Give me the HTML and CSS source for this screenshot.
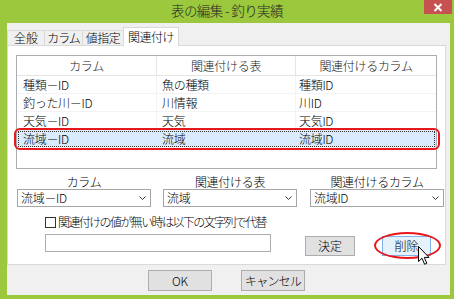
FILE: index.html
```html
<!DOCTYPE html>
<html lang="ja">
<head>
<meta charset="utf-8">
<title>表の編集 - 釣り実績</title>
<link rel="stylesheet" href="styles.css">
</head>
<body>
<div class="window">
  <div class="titlebar">
    <span></span>
    <span class="title">表の編集 - 釣り実績</span>
    <span class="close-wrap"><span class="close"><svg width="10" height="9" viewBox="0 0 10 9"><path d="M1.5 1 L8.5 8 M8.5 1 L1.5 8" stroke="#fff" stroke-width="2" fill="none"/></svg></span></span>
  </div>
  <div class="client">
    <div class="tabs">
      <div class="tab t1">全般</div>
      <div class="tab t2">カラム</div>
      <div class="tab t3">値指定</div>
      <div class="tab active">関連付け</div>
    </div>
    <div class="panel">
      <div class="list">
        <div class="row head">
          <div class="cell">カラム</div>
          <div class="cell">関連付ける表</div>
          <div class="cell">関連付けるカラム</div>
        </div>
        <div class="row">
          <div class="cell c1">種類－ID</div>
          <div class="cell c2">魚の種類</div>
          <div class="cell c3">種類ID</div>
        </div>
        <div class="row">
          <div class="cell c1">釣った川－ID</div>
          <div class="cell c2">川情報</div>
          <div class="cell c3">川ID</div>
        </div>
        <div class="row">
          <div class="cell c1">天気－ID</div>
          <div class="cell c2">天気</div>
          <div class="cell c3">天気ID</div>
        </div>
        <div class="row selected">
          <div class="cell c1">流域－ID</div>
          <div class="cell c2">流域</div>
          <div class="cell c3">流域ID</div>
        </div>
      </div>
      <div class="labels">
        <div>カラム</div>
        <div>関連付ける表</div>
        <div>関連付けるカラム</div>
      </div>
      <div class="combos">
        <div class="combo"><span>流域－ID</span><svg width="7" height="4" viewBox="0 0 7 4"><path d="M0.5 0.5 L3.5 3.5 L6.5 0.5" stroke="#333" fill="none"/></svg></div>
        <div class="combo"><span>流域</span><svg width="7" height="4" viewBox="0 0 7 4"><path d="M0.5 0.5 L3.5 3.5 L6.5 0.5" stroke="#333" fill="none"/></svg></div>
        <div class="combo"><span>流域ID</span><svg width="7" height="4" viewBox="0 0 7 4"><path d="M0.5 0.5 L3.5 3.5 L6.5 0.5" stroke="#333" fill="none"/></svg></div>
      </div>
      <div class="check-row">
        <span class="checkbox"></span>
        <span class="check-label">関連付けの値が無い時は以下の文字列で代替</span>
      </div>
      <div class="edit-row">
        <div class="textbox"></div>
        <div class="btn b-decide">決定</div>
        <div class="btn b-delete hover">削除
          <span class="ring"></span>
          <svg class="cursor" width="13" height="20" viewBox="0 0 13 20"><path d="M0.5 0.5 L0.5 15.5 L4 12.2 L6.6 18.3 L8.8 17.3 L6.3 11.4 L11 11.4 Z" fill="#fff" stroke="#000" stroke-width="1" stroke-linejoin="miter"/></svg>
        </div>
      </div>
    </div>
    <div class="footer">
      <div class="btn b-ok">OK</div>
      <div class="btn b-cancel">キャンセル</div>
    </div>
  </div>
</div>
</body>
</html>
```
FILE: styles.css
```css
* { box-sizing: border-box; }
html, body { margin: 0; padding: 0; }
body {
  background: #9bc83c;
  font-family: "Noto Sans CJK JP", "Noto Sans", sans-serif;
  font-size: 12px;
  font-weight: 300;
  color: #000;
}
.window {
  width: 454px;
  height: 299px;
  background: #9bc83c;
  display: flex;
  flex-direction: column;
}
.titlebar {
  height: 23px;
  display: grid;
  grid-template-columns: 1fr auto 1fr;
}
.title {
  font-size: 13.5px;
  line-height: 21px;
  color: #262626;
  letter-spacing: -0.6px;
}
.close-wrap { display: flex; justify-content: flex-end; }
.close {
  width: 28px;
  height: 14px;
  margin-right: 2px;
  background: #c75050;
  display: flex;
  align-items: center;
  justify-content: center;
}
.client {
  margin: 0 4px 4px 7px;
  flex: 1;
  background: #f0f0f0;
  padding-top: 4px;
  display: flex;
  flex-direction: column;
}
.tabs {
  display: flex;
  align-items: flex-end;
  height: 18px;
}
.tab {
  height: 15px;
  border: 1px solid #d9d9d9;
  border-bottom: none;
  background: #f0f0f0;
  text-align: center;
  line-height: 14px;
  font-size: 12px;
  white-space: nowrap;
}
.t1 { width: 38px; }
.t2 { width: 39px; margin-left: -1px; letter-spacing: -1px; }
.t3 { width: 42px; margin-left: -1px; letter-spacing: -0.5px; }
.tab.active {
  width: 56px;
  margin-left: -1px;
  height: 19px;
  margin-bottom: -1px;
  background: #fff;
  position: relative;
  z-index: 1;
  line-height: 17px;
  letter-spacing: -0.5px;
}
.panel {
  height: 220px;
  margin-right: 4px;
  background: #fff;
  border: 1px solid #d9d9d9;
  padding: 9px 8px 0 8px;
}
.list {
  height: 114px;
  border: 1px solid #abadb3;
  background: #fff;
}
.row {
  display: grid;
  grid-template-columns: 140px 139px 1fr;
  height: 18px;
  border-bottom: 1px solid #f3f3f3;
}
.row .cell {
  line-height: 17px;
  white-space: nowrap;
  border-right: 1px solid #f3f3f3;
  letter-spacing: -0.3px;
}
.row .cell:last-child { border-right: none; }
.head { height: 20px; border-bottom: 1px solid #e5e5e5; }
.head .cell {
  text-align: center;
  line-height: 19px;
  border-right: 1px solid #e5e5e5;
  color: #222;
}
.c1 { padding-left: 6px; }
.c2 { padding-left: 5px; }
.c3 { padding-left: 3px; }
.row.selected {
  background: #d9ebfc;
  outline: 1px dotted #333;
  outline-offset: -2px;
  position: relative;
}
.row.selected .cell { border-right-color: transparent; }
.row.selected::after {
  content: "";
  position: absolute;
  left: -3px;
  right: -4px;
  top: -2px;
  bottom: -3px;
  border: 2.5px solid #e6171d;
  border-radius: 6px;
}
.labels {
  margin: 6px 0 0 1px;
  display: grid;
  grid-template-columns: 134px 134px 135px;
  column-gap: 12px;
  width: 428px;
  height: 14px;
  line-height: 14px;
  text-align: center;
  white-space: nowrap;
  letter-spacing: -0.3px;
}
.combos {
  margin-left: 1px;
  display: grid;
  grid-template-columns: 134px 134px 135px;
  column-gap: 12px;
  width: 428px;
}
.combos .combo:nth-child(3) { margin-left: 1px; }
.labels div:nth-child(3) { margin-left: 1px; }
.combo {
  height: 18px;
  border: 1px solid #a5a5a5;
  background: #fff;
  display: flex;
  align-items: center;
  justify-content: space-between;
  padding: 0 4px 0 3px;
  line-height: 16px;
  letter-spacing: -0.3px;
}
.check-row {
  margin: 7px 0 0 29px;
  height: 16px;
  display: flex;
  align-items: center;
  gap: 2px;
}
.checkbox {
  width: 11px;
  height: 11px;
  border: 1px solid #333;
  background: #fff;
}
.check-label {
  line-height: 16px;
  letter-spacing: -1.6px;
  white-space: nowrap;
}
.edit-row {
  margin: 4px 0 0 29px;
  display: flex;
  align-items: flex-start;
}
.textbox {
  width: 226px;
  height: 18px;
  border: 1px solid #abadb3;
  background: #fff;
}
.btn {
  height: 20px;
  border: 1px solid #adadad;
  background: #e1e1e1;
  text-align: center;
  line-height: 18px;
  white-space: nowrap;
}
.b-decide { width: 50px; margin: 2px 0 0 34px; }
.b-delete {
  width: 49px;
  margin: 2px 0 0 27px;
  position: relative;
}
.b-delete.hover { background: #e5f1fb; border-color: #7eb4ea; }
.ring {
  position: absolute;
  left: -9px;
  right: -11px;
  top: -5px;
  bottom: -4px;
  border: 2.5px solid #e6171d;
  border-radius: 50%;
}
.cursor {
  position: absolute;
  left: 35px;
  top: 9px;
}
.footer {
  margin-top: 5px;
  padding-left: 141px;
  display: flex;
  gap: 29px;
}
.b-ok { width: 64px; height: 21px; line-height: 19px; }
.b-cancel { width: 64px; height: 21px; line-height: 19px; letter-spacing: -0.8px; }
```
